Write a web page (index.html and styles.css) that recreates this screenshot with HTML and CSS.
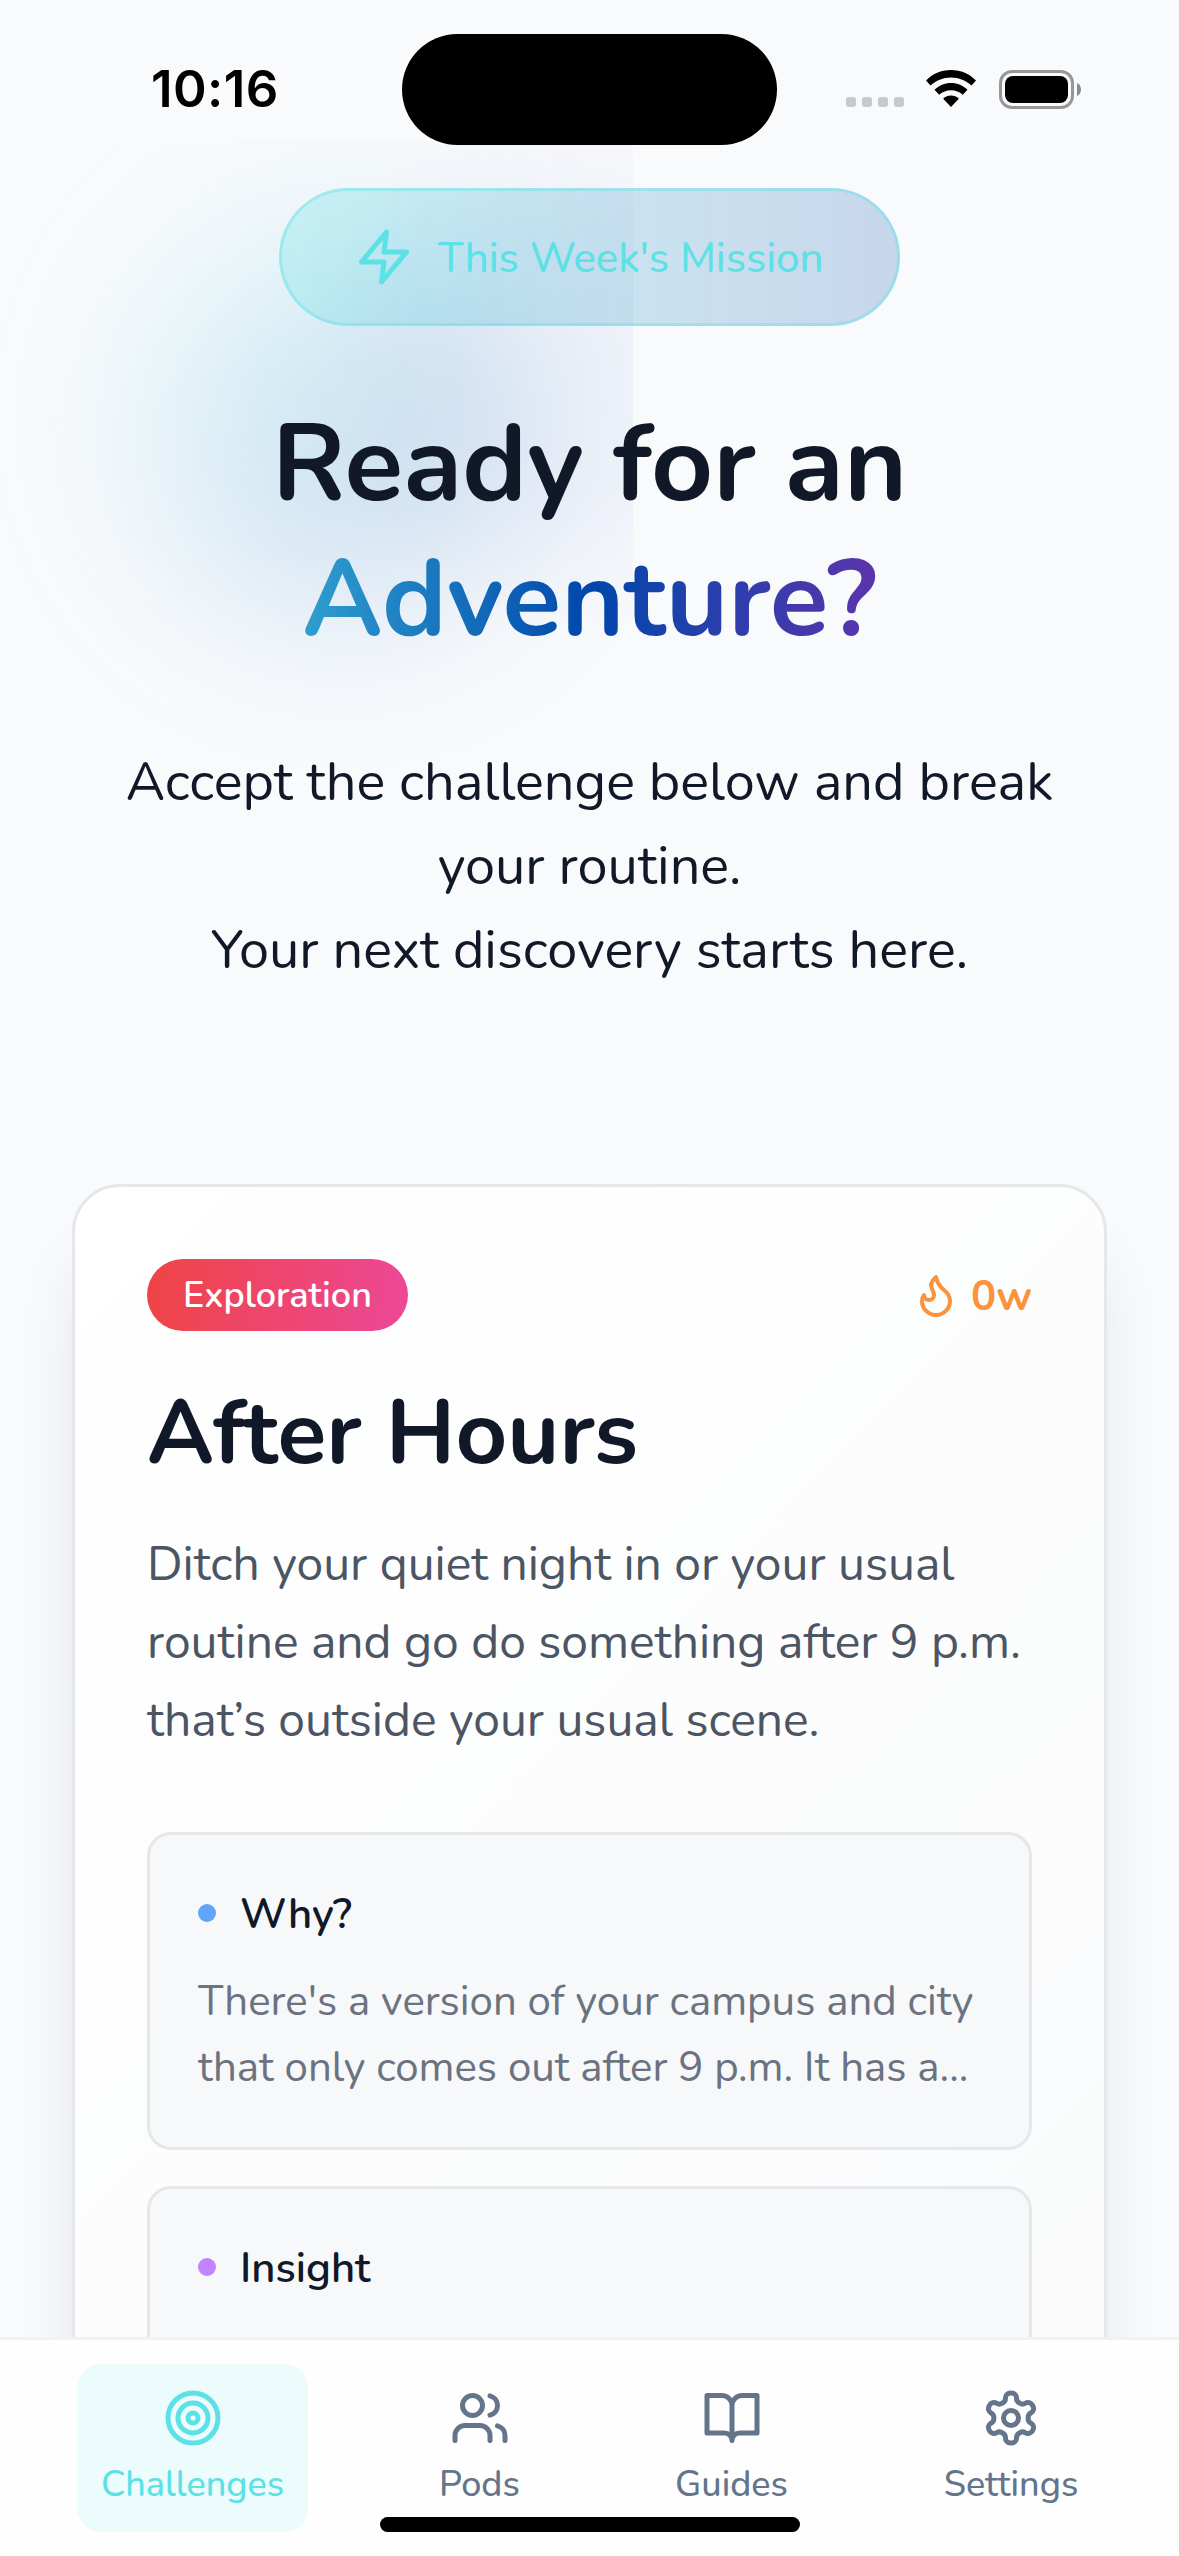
FILE: index.html
```
<!DOCTYPE html>
<html lang="en">
<head>
<meta charset="utf-8">
<title>Challenges</title>
<link rel="stylesheet" href="styles.css">
</head>
<body>
<div class="screen">
  <div class="glow"><div class="glow-disc"></div><div class="glow-tile"></div></div>

  <header class="status">
    <div class="time">10:16</div>
    <div class="island"></div>
    <div class="indicators">
      <div class="signal"><i></i><i></i><i></i><i></i></div>
      <svg class="wifi" viewBox="0 0 50 38"><path d="M25 0C35 0 43.500 4 50 10.500L45.500 15.500C40 10.500 33 7.500 25 7.500S10 10.500 4.500 15.500L0 10.500C6.500 4 15 0 25 0Z"/><path d="M25 13C31.500 13 37 15.500 41.500 19.700L36.800 24.700C33.500 21.800 29.500 20.200 25 20.200S16.500 21.800 13.200 24.700L8.500 19.700C13 15.500 18.500 13 25 13Z"/><path d="M25 25.500C28 25.500 30.500 26.700 32.800 28.700L25 37L17.200 28.700C19.500 26.700 22 25.500 25 25.500Z"/></svg>
      <svg class="battery" viewBox="0 0 82 39"><rect x="1.500" y="1.500" width="72" height="36" rx="11.500" fill="none" stroke="#969799" stroke-width="3"/><rect x="6" y="6" width="63" height="27" rx="8"/><path d="M78 13C81 14.500 82 17 82 19.500S81 24.500 78 26Z" fill="#8a8b8d"/></svg>
    </div>
  </header>

  <main class="content">
    <section class="hero">
      <div class="mission">
        <svg class="icon" viewBox="0 0 24 24"><path d="M13 2 3 14h9l-1 8 10-12h-9l1-8z"/></svg>
        <span>This Week's Mission</span>
      </div>
      <h1>Ready for an<br><span class="gradient">Adventure?</span></h1>
      <p class="lead">Accept the challenge below and break<br>your routine.<br>Your next discovery starts here.</p>
    </section>

    <article class="card">
      <div class="card-top">
        <span class="badge">Exploration</span>
        <span class="streak"><svg class="flame" viewBox="0 0 24 24"><path d="M8.500 14.500A2.500 2.500 0 0 0 11 12c0-1.380-.5-2-1-3-1.072-2.143-.224-4.054 2-6 .5 2.500 2 4.900 4 6.500 2 1.600 3 3.500 3 5.500a7 7 0 1 1-14 0c0-1.153.433-2.294 1-3a2.500 2.500 0 0 0 2.500 2.500z"/></svg><b>0w</b></span>
      </div>
      <h2>After Hours</h2>
      <p class="description">Ditch your quiet night in or your usual<br>routine and go do something after 9 p.m.<br>that’s outside your usual scene.</p>
      <section class="note">
        <h3><i class="dot blue"></i><span>Why?</span></h3>
        <p>There's a version of your campus and city<br>that only comes out after 9 p.m. It has a...</p>
      </section>
      <section class="note">
        <h3><i class="dot purple"></i><span>Insight</span></h3>
      </section>
    </article>
  </main>

  <nav class="tabs">
    <a class="tab active"><svg class="icon" viewBox="0 0 24 24"><circle cx="12" cy="12" r="10"/><circle cx="12" cy="12" r="6"/><circle cx="12" cy="12" r="2"/></svg><span>Challenges</span></a>
    <a class="tab pods"><svg class="icon" viewBox="0 0 24 24"><path d="M16 21v-2a4 4 0 0 0-4-4H6a4 4 0 0 0-4 4v2"/><circle cx="9" cy="7" r="4"/><path d="M22 21v-2a4 4 0 0 0-3-3.870M16 3.130a4 4 0 0 1 0 7.750"/></svg><span>Pods</span></a>
    <a class="tab guides"><svg class="icon" viewBox="0 0 24 24"><path d="M2 3h6a4 4 0 0 1 4 4v14a3 3 0 0 0-3-3H2zM22 3h-6a4 4 0 0 0-4 4v14a3 3 0 0 1 3-3h7z"/></svg><span>Guides</span></a>
    <a class="tab settings"><svg class="icon" viewBox="0 0 24 24"><path d="M12.220 2h-.44a2 2 0 0 0-2 2v.18a2 2 0 0 1-1 1.730l-.43.25a2 2 0 0 1-2 0l-.15-.08a2 2 0 0 0-2.730.73l-.22.38a2 2 0 0 0 .73 2.730l.15.1a2 2 0 0 1 1 1.720v.51a2 2 0 0 1-1 1.740l-.15.09a2 2 0 0 0-.73 2.730l.22.38a2 2 0 0 0 2.730.73l.15-.08a2 2 0 0 1 2 0l.43.25a2 2 0 0 1 1 1.730V20a2 2 0 0 0 2 2h.44a2 2 0 0 0 2-2v-.18a2 2 0 0 1 1-1.730l.43-.25a2 2 0 0 1 2 0l.15.08a2 2 0 0 0 2.730-.73l.22-.39a2 2 0 0 0-.73-2.730l-.15-.08a2 2 0 0 1-1-1.740v-.5a2 2 0 0 1 1-1.740l.15-.09a2 2 0 0 0 .73-2.730l-.22-.38a2 2 0 0 0-2.730-.73l-.15.08a2 2 0 0 1-2 0l-.43-.25a2 2 0 0 1-1-1.730V4a2 2 0 0 0-2-2z"/><circle cx="12" cy="12" r="3"/></svg><span>Settings</span></a>
    <div class="home-indicator"></div>
  </nav>
</div>
</body>
</html>
```
FILE: styles.css
```
* { box-sizing: border-box; margin: 0; }

body {
  font-family: Nunito, "Open Sans", sans-serif;
  color: #111827;
  background: #f9fafc;
}

.screen {
  position: relative;
  display: flex;
  flex-direction: column;
  width: 1179px;
  height: 2556px;
  overflow: hidden;
  background: #f9fafc;
}

/* soft colour glow behind the hero */
.glow {
  position: absolute;
  left: 0;
  top: 141px;
  width: 633px;
  height: 640px;
  overflow: hidden;
}
.glow-disc {
  position: absolute;
  left: 148px;
  top: 88px;
  width: 384px;
  height: 384px;
  border-radius: 50%;
  background: linear-gradient(135deg, #5ce1e6 15%, #1c7cc4 60%, #3a5fc0);
  opacity: .2;
  filter: blur(88px);
}
.glow-tile {
  position: absolute;
  left: 120px;
  top: 0;
  width: 513px;
  height: 482px;
  background: radial-gradient(270px 290px at 460px 220px, rgba(50, 80, 190, .045), rgba(50, 80, 190, .04) 45%, rgba(50, 80, 190, 0));
}

.status {
  position: relative;
  display: grid;
  grid-template-columns: 402px 375px 1fr;
  align-items: center;
  flex: none;
  height: 144px;
  padding-top: 33px;
}
.time {
  padding-left: 151px;
  font: 600 51px/60px Inter, sans-serif;
  letter-spacing: .4px;
  color: #000;
}
.island { height: 111px; margin-top: 1px; border-radius: 56px; background: #000; }
.indicators { display: flex; align-items: flex-start; padding-left: 69px; height: 39px; }
.signal { display: flex; gap: 6px; padding-top: 27px; margin-right: 22px; }
.signal i { width: 10px; height: 10px; border-radius: 3px; background: #c8c9cb; }
.wifi { width: 50px; height: 38px; margin-right: 23px; }
.battery { width: 82px; height: 39px; }

.content { position: relative; flex: 1; min-height: 0; overflow: hidden; padding: 44px 72px 0; }

.hero { height: 996px; text-align: center; }

.icon {
  width: 60px;
  height: 60px;
  fill: none;
  stroke: currentColor;
  stroke-width: 2;
  stroke-linecap: round;
  stroke-linejoin: round;
}

.mission {
  display: flex;
  align-items: center;
  gap: 24px;
  width: 621px;
  height: 138px;
  margin: 0 auto;
  padding: 0 72px;
  border: 3px solid rgba(92, 225, 230, .4);
  border-radius: 69px;
  background: linear-gradient(90deg, rgba(92, 225, 230, .27), rgba(0, 71, 171, .2)) border-box;
  color: #5ce1e6;
  font-size: 42px;
  font-weight: 500;
  letter-spacing: -.08px;
  white-space: nowrap;
}
.mission span { padding-top: 2px; }

h1 { margin-top: 71px; font-size: 108px; font-weight: 700; line-height: 135px; }
.gradient {
  background: linear-gradient(90deg, #2f9fd0, #0047ab 50%, #5b34ad);
  -webkit-background-clip: text;
  background-clip: text;
  color: transparent;
}
.lead { margin-top: 73px; font-size: 54px; line-height: 84px; white-space: nowrap; }

.card {
  height: 1500px;
  padding: 72px;
  border: 3px solid #e5e7eb;
  border-radius: 48px;
  background: linear-gradient(135deg, #fff, #f9fafb);
  box-shadow: 0 60px 75px -20px rgba(17, 24, 39, .13);
}
.card-top { display: flex; justify-content: space-between; align-items: center; height: 72px; }
.badge {
  width: 261px;
  height: 72px;
  padding-top: 1px;
  border-radius: 36px;
  background: linear-gradient(100deg, #ef4444, #ec4899);
  color: #fff;
  font-size: 36px;
  font-weight: 600;
  line-height: 72px;
  text-align: center;
  white-space: nowrap;
}
.streak { display: flex; align-items: center; gap: 11px; color: #fb923c; font-size: 42px; line-height: 60px; }
.streak b { padding-top: 3px; }
.flame { width: 48px; height: 48px; fill: none; stroke: currentColor; stroke-width: 2; stroke-linecap: round; stroke-linejoin: round; }
h2 { margin-top: 43px; font-size: 90px; line-height: 120px; }
.description { margin-top: 31px; color: #4b5563; font-size: 48px; line-height: 78px; white-space: nowrap; }

.note {
  height: 318px;
  margin-top: 36px;
  padding: 46px 48px;
  border: 3px solid #e5e7eb;
  border-radius: 24px;
  background: #f7f8fa;
}
.description + .note { margin-top: 73px; }
.note h3 { display: flex; align-items: center; gap: 24px; height: 63px; font-size: 42px; font-weight: 600; line-height: 63px; }
.note h3 span { padding-top: 3px; }
.dot { width: 18px; height: 18px; border-radius: 50%; }
.blue { background: #60a5fa; }
.purple { background: #c084fc; }
.note p { margin-top: 25px; color: #6b7280; font-size: 42px; line-height: 66px; white-space: nowrap; }

.tabs {
  position: relative;
  display: flex;
  gap: 109px;
  flex: none;
  height: 219px;
  padding: 24px 77px;
  border-top: 3px solid #f1f2f4;
  background: #fefefe;
}
.tab {
  display: flex;
  flex-direction: column;
  align-items: center;
  flex: none;
  width: 231px;
  height: 168px;
  padding-top: 24px;
  border-radius: 24px;
  color: #64748b;
  font-size: 36px;
  font-weight: 500;
  line-height: 48px;
}
.tab span { margin-top: 13px; }
.active { background: #ecfbfc; color: #5ce1e6; }
.pods { width: 125px; }
.guides { width: 161px; }
.settings { width: 180px; }
.home-indicator {
  position: absolute;
  left: 380px;
  bottom: 24px;
  width: 420px;
  height: 15px;
  border-radius: 8px;
  background: #000;
}
```
